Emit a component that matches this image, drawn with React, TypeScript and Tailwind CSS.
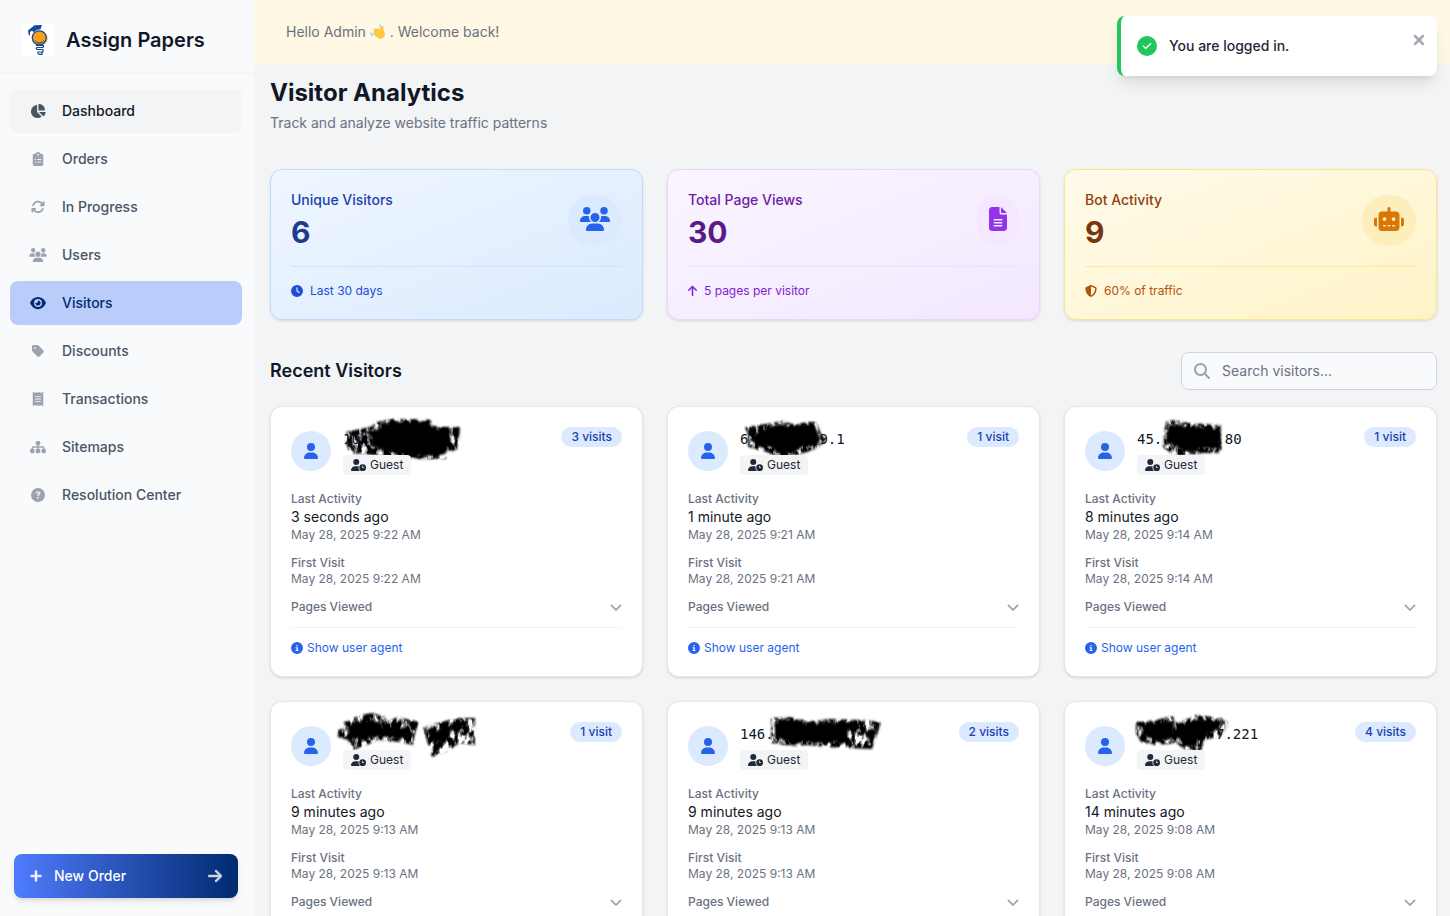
import type { IconType } from "react-icons";
import {
  FaArrowRight,
  FaArrowsRotate,
  FaArrowUp,
  FaChartPie,
  FaCheck,
  FaChevronDown,
  FaCircleInfo,
  FaCircleQuestion,
  FaClipboardList,
  FaClock,
  FaEye,
  FaFileLines,
  FaMagnifyingGlass,
  FaPlus,
  FaReceipt,
  FaRobot,
  FaShieldHalved,
  FaSitemap,
  FaTag,
  FaUser,
  FaUserClock,
  FaUsers,
  FaXmark,
} from "react-icons/fa6";

type NavItem = { label: string; icon: IconType; width: string; state?: "hover" | "active" };

const navItems: NavItem[] = [
  { label: "Dashboard", icon: FaChartPie, width: "w-4", state: "hover" },
  { label: "Orders", icon: FaClipboardList, width: "w-3" },
  { label: "In Progress", icon: FaArrowsRotate, width: "w-[14px]" },
  { label: "Users", icon: FaUsers, width: "w-[18px]" },
  { label: "Visitors", icon: FaEye, width: "w-4", state: "active" },
  { label: "Discounts", icon: FaTag, width: "w-3" },
  { label: "Transactions", icon: FaReceipt, width: "w-3" },
  { label: "Sitemaps", icon: FaSitemap, width: "w-4" },
  { label: "Resolution Center", icon: FaCircleQuestion, width: "w-[14px]" },
];

const navRow = {
  idle: "text-gray-600",
  hover: "bg-[#f3f4f6] text-gray-900",
  active: "bg-[#bacdfa] text-[#002b70]",
};

const navIcon = {
  idle: "text-[#9ca3af]",
  hover: "text-[#4b5563]",
  active: "text-[#002b70]",
};

const stats = [
  {
    label: "Unique Visitors",
    value: "6",
    note: "Last 30 days",
    icon: FaUsers,
    iconWidth: "w-[30px]",
    noteIcon: FaClock,
    noteIconWidth: "w-3",
    card: "border-[#bfdbfe] from-[#eff6ff] to-[#dbeafe]",
    labelColor: "text-[#1e40af]",
    valueColor: "text-[#1e3a8a]",
    badge: "bg-[#dbeafe] text-[#2563eb]",
    noteColor: "border-[#bfdbfe]/60 text-[#1d4ed8]",
  },
  {
    label: "Total Page Views",
    value: "30",
    note: "5 pages per visitor",
    icon: FaFileLines,
    iconWidth: "w-[18px]",
    noteIcon: FaArrowUp,
    noteIconWidth: "w-[9px]",
    card: "border-[#e9d5ff] from-[#faf5ff] to-[#f3e8ff]",
    labelColor: "text-[#6b21a8]",
    valueColor: "text-[#581c87]",
    badge: "bg-[#f3e8ff] text-[#9333ea]",
    noteColor: "border-[#e9d5ff]/60 text-[#7e22ce]",
  },
  {
    label: "Bot Activity",
    value: "9",
    note: "60% of traffic",
    icon: FaRobot,
    iconWidth: "w-[30px]",
    noteIcon: FaShieldHalved,
    noteIconWidth: "w-3",
    card: "border-[#fde68a] from-[#fffbeb] to-[#fef3c7]",
    labelColor: "text-[#92400e]",
    valueColor: "text-[#78350f]",
    badge: "bg-[#fdefbc] text-[#d97706]",
    noteColor: "border-[#fde68a]/80 text-[#b45309]",
  },
];

type Visitor = {
  prefix: string;
  suffix: string;
  gap: string;
  haze: string;
  core: string;
  visits: string;
  ago: string;
  last: string;
  first: string;
};

const visitors: Visitor[] = [
  {
    prefix: "10",
    suffix: "",
    gap: "w-0",
    haze: "M3 5 27 0 34-5 50-8 88-7 88-1 97 0 117 0 116 13 114 23 103 25 103 32 77 32 50 30 30 28 7 26 3 16Z",
    core: "M22 5 36 1 42-4 52-6 86-6 90 1 106 2 108 14 103 24 98 29 74 29 50 26 34 23 27 19 30 12Z",
    visits: "3 visits",
    ago: "3 seconds ago",
    last: "May 28, 2025 9:22 AM",
    first: "May 28, 2025 9:22 AM",
  },
  {
    prefix: "6",
    suffix: "9.1",
    gap: "w-[71px]",
    haze: "M5 0 32-4 43-6 52-3 72-5 77-5 80 5 86 12 80 20 67 25 53 29 35 29 27 25 8 20 8 8Z",
    core: "M9 11 22 3 36-2 50-1 72-3 78 8 80 14 72 18 62 20 50 27 36 27 30 20 16 17Z",
    visits: "1 visit",
    ago: "1 minute ago",
    last: "May 28, 2025 9:21 AM",
    first: "May 28, 2025 9:21 AM",
  },
  {
    prefix: "45.",
    suffix: ".80",
    gap: "w-[54px]",
    haze: "M29-5 36-7 52-4 84-2 84 26 66 26 42 29 34 26 26 20 27 6Z",
    core: "M31-3 52 0 83 2 83 21 70 19 60 25 44 23 30 16Z",
    visits: "1 visit",
    ago: "8 minutes ago",
    last: "May 28, 2025 9:14 AM",
    first: "May 28, 2025 9:14 AM",
  },
  {
    prefix: "",
    suffix: "",
    gap: "w-0",
    haze: "M1 0 17-7 29-9 42-5 45 0 54-5 77 0 72 11 70 23 57 20 34 18 24 23 10 28 5 18-5 15-5 8 3 6ZM80 6 97 0 117-4 132-4 132 23 117 21 107 28 89 35Z",
    core: "M3 4 20-1 38 0 42 8 66 6 70 14 58 16 30 14 10 19 5 14ZM82 8 100 6 122-1 122 4 106 12 102 20 92 22Z",
    visits: "1 visit",
    ago: "9 minutes ago",
    last: "May 28, 2025 9:13 AM",
    first: "May 28, 2025 9:13 AM",
  },
  {
    prefix: "146.",
    suffix: "",
    gap: "w-0",
    haze: "M31-4 52-5 62-2 67 0 87-3 120-2 141 0 132 27 107 26 87 25 67 23 53 24 31 21Z",
    core: "M33 2 40-2 58-2 64 2 110 0 118 4 108 12 106 21 70 19 54 21 38 17ZM124 10 138 6 134 20Z",
    visits: "2 visits",
    ago: "9 minutes ago",
    last: "May 28, 2025 9:13 AM",
    first: "May 28, 2025 9:13 AM",
  },
  {
    prefix: "",
    suffix: "7.221",
    gap: "w-[79px]",
    haze: "M-1 0 19-2 36-6 38 0 42 1 59-7 84-4 91 1 84 14 67 18 64 29 49 28 39 21 19 23 4 20-1 11Z",
    core: "M5 2 36-1 38 6 48 2 60-2 82-2 80 8 70 14 62 15 62 25 48 23 42 17 18 18 4 13Z",
    visits: "4 visits",
    ago: "14 minutes ago",
    last: "May 28, 2025 9:08 AM",
    first: "May 28, 2025 9:08 AM",
  },
];

function Logo() {
  return (
    <svg viewBox="0 0 32 32" className="size-8 bg-white" aria-hidden="true">
      <circle cx="18.5" cy="14.5" r="7.4" fill="#fcd48b" />
      <circle cx="17.3" cy="13.8" r="7" fill="#f9a01f" stroke="#124a97" strokeWidth="1.3" />
      <path d="M13 16.5q4 4.5 9 0M14.5 18.5q3 2 6 0" fill="none" stroke="#7c5a35" strokeWidth="1" />
      <path d="M6 6.5 12.5 1.2 20 1 18.5 5.2 14.5 6 11.500 8.500 10.500 6.800 8 7.800 8 11 6.800 11.500Z" fill="#124a97" />
      <path
        d="M14 21.5h7.500q.5 2-2 2h-4.500q-1.500 1 0 2h5.500q1.500 1.300 0 2.500h-4.500q-.5 2.300 1.500 2.300h2.500v-2"
        fill="none"
        stroke="#124a97"
        strokeWidth="1.2"
      />
    </svg>
  );
}

function WavingHand() {
  return (
    <svg viewBox="0 0 16 16" className="inline size-4 align-[-3px]" role="img" aria-label="waving hand">
      <path
        d="M4.200 6.200 3.600 4.900q.7-1 1.600-.1L6 5.300l.8-.9q.8-.5 1.400.2l1 1.100 1-1.200 1.200-2.200q1.400-.8 2 .7l.2 3 1.200 3.200q.6 3-1.600 4.700-3 2-5.800-.2L4 10.400q-.5-1 .4-1.500l-.8-1q-.2-1.300.6-1.700Z"
        fill="#ffc83d"
      />
      <path d="M9 1q2 0 2.500 1.500M9.500 3l1 .6M.8 8.500Q.8 11 3 12M2.600 9l.6 1.200" fill="none" stroke="#9cc3f5" strokeWidth="1.2" />
    </svg>
  );
}

function Scribble({ id, haze, core }: { id: string; haze: string; core: string }) {
  return (
    <svg
      viewBox="-10 -14 160 56"
      className="pointer-events-none absolute -left-[10px] -top-[14px] h-14 w-40"
      aria-hidden="true"
    >
      <filter id={`${id}-haze`} x="-10" y="-14" width="160" height="56" filterUnits="userSpaceOnUse">
        <feTurbulence type="fractalNoise" baseFrequency="0.16 0.09" numOctaves="3" seed="7" result="noise" />
        <feColorMatrix in="noise" type="matrix" values="0 0 0 0 0  0 0 0 0 0  0 0 0 0 0  4 0 0 0 -1.3" result="mottle" />
        <feGaussianBlur in="SourceGraphic" stdDeviation="0.8" result="soft" />
        <feComposite in="soft" in2="mottle" operator="in" />
      </filter>
      <filter id={`${id}-core`} x="-10" y="-14" width="160" height="56" filterUnits="userSpaceOnUse">
        <feTurbulence type="fractalNoise" baseFrequency="0.2 0.07" numOctaves="2" seed="3" result="noise" />
        <feDisplacementMap in="SourceGraphic" in2="noise" scale="8" xChannelSelector="R" yChannelSelector="G" />
        <feGaussianBlur stdDeviation="1.3" />
      </filter>
      <path d={haze} filter={`url(#${id}-haze)`} />
      <path d={core} filter={`url(#${id}-core)`} />
    </svg>
  );
}

function Sidebar() {
  return (
    <aside className="flex w-[254px] shrink-0 flex-col bg-[#f9fafc]">
      <div className="flex items-center gap-3 border-b border-[#f3f4f6] pb-4 pl-[22px] pt-6">
        <Logo />
        <span className="text-xl font-semibold text-gray-900">Assign Papers</span>
      </div>
      <nav className="flex flex-1 flex-col gap-1 pl-[10px] pr-3 pt-4">
        {navItems.map(({ label, icon: Icon, width, state }) => (
          <a
            key={label}
            href="#"
            className={`flex h-11 items-center gap-3 rounded-lg px-4 text-sm font-medium ${navRow[state ?? "idle"]}`}
          >
            <span className={`flex w-6 justify-center ${navIcon[state ?? "idle"]}`}>
              <Icon className={`h-[14px] ${width}`} />
            </span>
            {label}
          </a>
        ))}
      </nav>
      <div className="px-4 pb-[18px] pl-[14px]">
        <button
          type="button"
          className="flex h-11 w-full items-center rounded-lg bg-linear-to-r from-[#4f7cff] to-[#002b70] px-4 text-sm font-medium text-white shadow-md"
        >
          <FaPlus className="mr-3 h-[14px] w-3" strokeWidth={24} stroke="currentColor" />
          New Order
          <FaArrowRight className="ml-auto h-4 w-[14px] opacity-80" strokeWidth={16} stroke="currentColor" />
        </button>
      </div>
    </aside>
  );
}

function StatCard({ stat }: { stat: (typeof stats)[number] }) {
  const Icon = stat.icon;
  const NoteIcon = stat.noteIcon;
  return (
    <div className={`rounded-xl border bg-linear-to-br p-5 shadow-sm ${stat.card}`}>
      <div className="flex items-center justify-between">
        <div>
          <p className={`text-sm font-medium ${stat.labelColor}`}>{stat.label}</p>
          <p className={`mt-1 text-3xl font-bold ${stat.valueColor}`}>{stat.value}</p>
        </div>
        <div className={`rounded-full px-3 pb-[15px] pt-3 ${stat.badge}`}>
          <Icon className={`h-6 ${stat.iconWidth}`} />
        </div>
      </div>
      <p className={`mt-4 flex items-center gap-[7px] border-t pt-4 text-xs ${stat.noteColor}`}>
        <NoteIcon className={`h-3 ${stat.noteIconWidth}`} />
        {stat.note}
      </p>
    </div>
  );
}

function VisitorCard({ visitor, id }: { visitor: Visitor; id: string }) {
  return (
    <article className="rounded-xl border border-gray-200 bg-white p-5 text-xs text-gray-500 shadow-sm">
      <div className="flex items-start justify-between">
        <div className="flex items-center gap-3">
          <div className="flex size-10 items-center justify-center rounded-full bg-[#dbeafe] text-[#2563eb]">
            <FaUser className="h-4 w-[14px]" />
          </div>
          <div className="relative">
            <Scribble id={id} haze={visitor.haze} core={visitor.core} />
            <p className="relative flex h-6 items-center whitespace-nowrap font-['DejaVu_Sans_Mono',monospace] text-sm text-gray-900">
              {visitor.prefix && <span>{visitor.prefix}</span>}
              <span className={visitor.gap} />
              {visitor.suffix && <span>{visitor.suffix}</span>}
            </p>
            <span className="relative mt-1 flex h-5 w-fit items-center gap-1 rounded bg-[#f3f4f6] px-2 text-[#1f2937]">
              <FaUserClock className="h-3 w-[15px]" />
              Guest
            </span>
          </div>
        </div>
        <span className="rounded-full bg-[#dbeafe] px-[10px] py-[2px] font-medium text-[#1e40af]">{visitor.visits}</span>
      </div>
      <div className="mt-4">
        <p className="font-medium">Last Activity</p>
        <p className="text-sm text-gray-900">{visitor.ago}</p>
        <p>{visitor.last}</p>
      </div>
      <div className="mt-3">
        <p className="font-medium">First Visit</p>
        <p>{visitor.first}</p>
      </div>
      <button type="button" className="mt-3 flex w-full items-center justify-between font-medium">
        Pages Viewed
        <FaChevronDown className="size-3 text-[#9ca3af]" strokeWidth={16} stroke="currentColor" />
      </button>
      <div className="mt-3 border-t border-[#f3f4f6] pt-3">
        <button type="button" className="flex items-center gap-1 text-[#2563eb]">
          <FaCircleInfo className="size-3" />
          Show user agent
        </button>
      </div>
    </article>
  );
}

function Toast() {
  return (
    <div
      role="status"
      className="absolute right-[13px] top-4 flex h-[60px] w-80 items-center rounded-lg border-l-4 border-[#22c55e] bg-white px-4 shadow-lg"
    >
      <span className="mr-3 flex size-5 items-center justify-center rounded-full bg-[#22c55e] text-white">
        <FaCheck className="size-[10px]" />
      </span>
      <span className="text-sm font-medium text-[#1f2937]">You are logged in.</span>
      <button type="button" aria-label="Close" className="absolute right-3 top-4 text-[#9ca3af]">
        <FaXmark className="h-4 w-3" strokeWidth={20} stroke="currentColor" />
      </button>
    </div>
  );
}

export default function App() {
  return (
    <div className="relative flex h-screen overflow-hidden bg-[#f3f4f6] font-['Inter',sans-serif]">
      <Sidebar />
      <div className="flex min-w-0 flex-1 flex-col">
        <header className="flex h-16 shrink-0 items-center bg-[#fff8e4] px-8 text-sm text-gray-500">
          <p>
            Hello Admin <WavingHand /> . Welcome back!
          </p>
        </header>
        <main className="flex-1 overflow-y-auto pb-6 pl-4 pr-[13px] pt-[13px] [scrollbar-width:none]">
          <h1 className="text-2xl font-bold text-gray-900">Visitor Analytics</h1>
          <p className="mt-1 text-sm text-gray-500">Track and analyze website traffic patterns</p>
          <section className="mt-9 grid grid-cols-3 gap-6">
            {stats.map((stat) => (
              <StatCard key={stat.label} stat={stat} />
            ))}
          </section>
          <div className="mt-8 flex items-center justify-between">
            <h2 className="text-lg font-semibold text-gray-900">Recent Visitors</h2>
            <label className="flex h-[38px] w-64 items-center gap-3 rounded-lg border border-[#d1d5db] bg-[#f9fafc] px-3">
              <FaMagnifyingGlass className="size-4 shrink-0 text-[#9ca3af]" />
              <input
                type="search"
                aria-label="Search visitors"
                placeholder="Search visitors..."
                className="w-full bg-transparent text-sm text-gray-900 outline-none placeholder:text-[#6b7280]"
              />
            </label>
          </div>
          <section className="mt-4 grid grid-cols-3 gap-6">
            {visitors.map((visitor, i) => (
              <VisitorCard key={i} visitor={visitor} id={`scribble-${i}`} />
            ))}
          </section>
        </main>
      </div>
      <Toast />
    </div>
  );
}
